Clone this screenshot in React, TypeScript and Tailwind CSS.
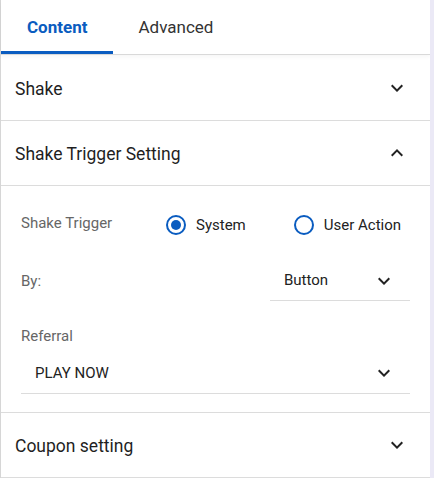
import React, { useState } from 'react';

const Chevron = ({ up = false }: { up?: boolean }) => (
  <svg viewBox="0 0 24 24" className={`h-6 w-6 fill-[#222] ${up ? 'rotate-180' : ''}`}>
    <path d="M16.59 8.59 12 13.17 7.41 8.59 6 10l6 6 6-6z" />
  </svg>
);

const Radio = ({ checked, label }: { checked: boolean; label: string }) => (
  <label className="flex items-center gap-[10px] cursor-pointer">
    <span className="flex h-5 w-5 items-center justify-center rounded-full border-2 border-[#0a5cc0]">
      {checked && <span className="h-[10px] w-[10px] rounded-full bg-[#0a5cc0]" />}
    </span>
    <span className="text-[15px] text-[#222]">{label}</span>
  </label>
);

const SectionHeader = ({ title, open = false }: { title: string; open?: boolean }) => (
  <div className="flex h-[66px] items-center justify-between border-b border-[#dcdcdc] pl-[14px] pr-[21px]">
    <span className="pt-[2px] text-[17.5px] text-[#1f1f1f]">{title}</span>
    <Chevron up={open} />
  </div>
);

export default function App() {
  const [tab, setTab] = useState<'content' | 'advanced'>('content');

  return (
    <div className="flex h-[478px] w-[434px] bg-white font-['Roboto',sans-serif]">
      <div className="flex w-[430px] flex-col border-l border-[#d6d6d6]">
        {/* Tabs */}
        <div className="flex h-[56px] border-b border-[#d9d9d9] shadow-[0_2px_4px_rgba(0,0,0,0.04)]">
          <button
            onClick={() => setTab('content')}
            className={`flex items-center border-b-[3px] px-[26px] pt-[5px] text-[17px] ${
              tab === 'content' ? 'border-[#0a5cc0] font-bold text-[#0a5cc0]' : 'border-transparent text-[#333]'
            }`}
          >
            Content
          </button>
          <button
            onClick={() => setTab('advanced')}
            className={`flex items-center border-b-[3px] px-[25px] pt-[5px] text-[17px] ${
              tab === 'advanced' ? 'border-[#0a5cc0] font-bold text-[#0a5cc0]' : 'border-transparent text-[#333]'
            }`}
          >
            Advanced
          </button>
        </div>

        <SectionHeader title="Shake" />
        <SectionHeader title="Shake Trigger Setting" open />

        {/* Trigger settings body */}
        <div className="border-b border-[#dcdcdc] px-[20px] pb-[18px] pt-[27px]">
          <div className="flex h-6 items-center">
            <span className="w-[145px] pb-[3px] text-[15px] text-[#666]">Shake Trigger</span>
            <div className="flex items-center gap-[48px]">
              <Radio checked label="System" />
              <Radio checked={false} label="User Action" />
            </div>
          </div>

          <div className="mt-[24px] flex items-center justify-between">
            <span className="text-[15px] text-[#666]">By:</span>
            <div className="flex h-10 w-[140px] items-center justify-between border-b border-[#dcdcdc] pl-[14px] pr-[14px]">
              <span className="text-[15px] text-[#222]">Button</span>
              <Chevron />
            </div>
          </div>

          <div className="mt-[24px] text-[15px] text-[#666]">Referral</div>
          <div className="mt-[6px] flex h-10 items-center justify-between border-b border-[#dcdcdc] pl-[14px] pr-[14px]">
            <span className="text-[15px] text-[#222]">PLAY NOW</span>
            <Chevron />
          </div>
        </div>

        <SectionHeader title="Coupon setting" />
      </div>
      <div className="w-1 bg-[#ebe9f6]" />
    </div>
  );
}
